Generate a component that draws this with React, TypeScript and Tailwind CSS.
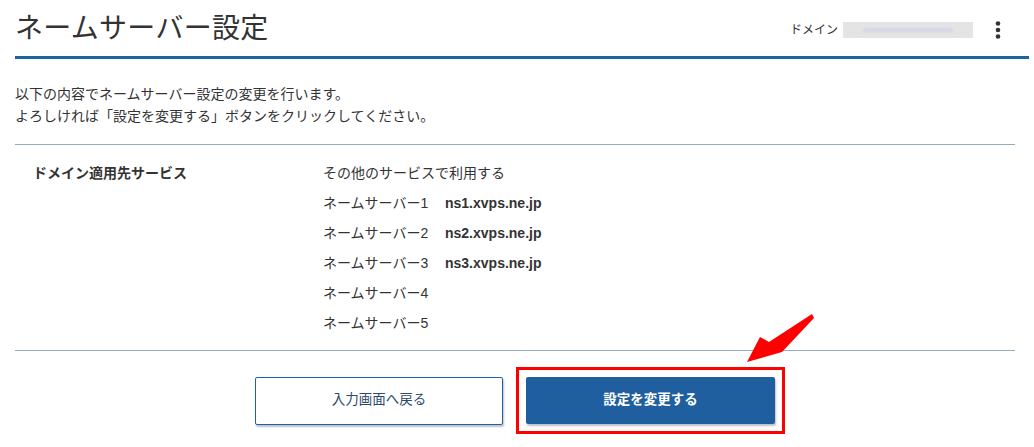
import React from "react";

const font = { fontFamily: '"Liberation Sans", "Noto Sans CJK JP", sans-serif' };

const servers = [
  { name: "ネームサーバー1", host: "ns1.xvps.ne.jp" },
  { name: "ネームサーバー2", host: "ns2.xvps.ne.jp" },
  { name: "ネームサーバー3", host: "ns3.xvps.ne.jp" },
  { name: "ネームサーバー4", host: "" },
  { name: "ネームサーバー5", host: "" },
];

function Kebab() {
  return (
    <svg width="6" height="18" viewBox="0 0 6 18" className="text-[#333]">
      <circle cx="3" cy="2.5" r="2.3" fill="currentColor" />
      <circle cx="3" cy="9" r="2.3" fill="currentColor" />
      <circle cx="3" cy="15.5" r="2.3" fill="currentColor" />
    </svg>
  );
}

export default function App() {
  return (
    <div className="relative w-[1034px] h-[447px] bg-white text-[#333] overflow-hidden" style={font}>
      {/* header */}
      <div className="ml-[15px] w-[1014px] h-[59px] border-b-[3px] border-[#1d62a4] flex items-end justify-between">
        <h1 className="text-[28px] leading-[40px] pb-[7px] tracking-[0.3px] text-[#333]">ネームサーバー設定</h1>
        <div className="flex items-center pb-[17px] pr-[28px]">
          <span className="text-[12px] mr-[5px]">ドメイン</span>
          <div className="w-[130px] h-[16px] bg-[#e4e4e4] flex items-center justify-center">
            <div className="w-[90px] h-[4px] rounded-full bg-[#d4d8e4] blur-[1px]" />
          </div>
          <div className="ml-[22px]">
            <Kebab />
          </div>
        </div>
      </div>

      {/* description */}
      <div className="ml-[15px] mt-[24px] text-[14px] leading-[22px]">
        <p>以下の内容でネームサーバー設定の変更を行います。</p>
        <p>よろしければ「設定を変更する」ボタンをクリックしてください。</p>
      </div>

      {/* table */}
      <div className="ml-[15px] w-[1000px] mt-[17px] border-t border-b border-[#93acc4] pt-[13px] pb-[12px] flex text-[14px]">
        <div className="w-[308px] pl-[18px] font-bold leading-[30px]">ドメイン適用先サービス</div>
        <div className="flex flex-col">
          <div className="leading-[30px]">その他のサービスで利用する</div>
          {servers.map((s) => (
            <div key={s.name} className="flex leading-[30px] h-[30px]">
              <span className="w-[122px]">{s.name}</span>
              {s.host && <span className="font-bold">{s.host}</span>}
            </div>
          ))}
        </div>
      </div>

      {/* buttons */}
      <div className="flex items-center ml-[255px] mt-[16px]">
        <button className="w-[248px] h-[48px] bg-white border border-[#1d62a4] rounded-[2px] shadow-[1px_2px_2px_rgba(0,0,0,0.25)] text-[13.5px] text-[#2c4a6b]">
          入力画面へ戻る
        </button>
        <div className="ml-[13px] border-[3px] border-[#ff0000] p-[7px]">
          <button className="w-[249px] h-[47px] bg-[#1f5fa0] rounded-[2px] shadow-[1px_2px_2px_rgba(0,0,0,0.25)] text-[13.5px] font-bold text-white">
            設定を変更する
          </button>
        </div>
      </div>

      {/* arrow annotation */}
      <svg className="absolute left-[740px] top-[308px]" width="80" height="60" viewBox="740 308 80 60">
        <polygon
          points="747,362 760,337 769,342 812,314 814,318 782,352"
          fill="#ff0000"
        />
      </svg>
    </div>
  );
}
